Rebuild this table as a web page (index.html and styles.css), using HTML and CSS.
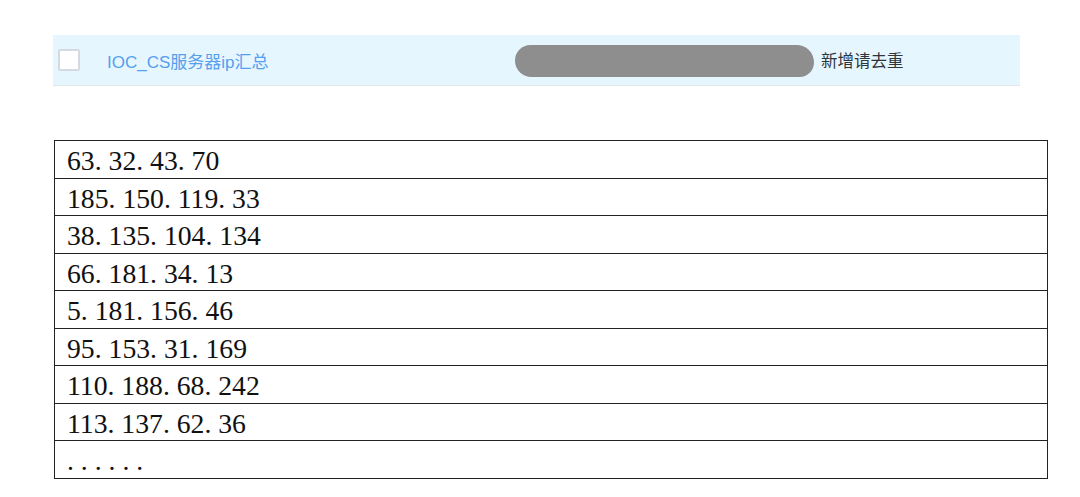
FILE: index.html
```html
<!DOCTYPE html>
<html lang="zh-CN">
<head>
<meta charset="utf-8">
<title>IOC</title>
<link rel="stylesheet" href="styles.css">
</head>
<body>
<div class="banner">
  <span class="checkbox"></span>
  <span class="title">IOC_CS服务器ip汇总</span>
  <span class="redact"></span>
  <span class="note">新增请去重</span>
</div>
<div class="iplist">
  <div class="row">63. 32. 43. 70</div>
  <div class="row">185. 150. 119. 33</div>
  <div class="row">38. 135. 104. 134</div>
  <div class="row">66. 181. 34. 13</div>
  <div class="row">5. 181. 156. 46</div>
  <div class="row">95. 153. 31. 169</div>
  <div class="row">110. 188. 68. 242</div>
  <div class="row">113. 137. 62. 36</div>
  <div class="row">. . . . . .</div>
</div>
</body>
</html>
```
FILE: styles.css
```css
html, body {
  margin: 0;
  padding: 0;
  background: #ffffff;
}
.banner {
  margin: 35px 0 0 53px;
  width: 967px;
  height: 50px;
  background: #e6f6fe;
  border-bottom: 1px solid #e2e7ec;
  display: flex;
  align-items: center;
  font-family: "Liberation Sans", "Noto Sans CJK SC", sans-serif;
  font-size: 16.5px;
}
.checkbox {
  box-sizing: border-box;
  width: 22px;
  height: 22px;
  margin-left: 5px;
  background: #ffffff;
  border: 2px solid #d5dae0;
  border-radius: 2px;
  flex: none;
}
.title {
  margin-left: 27px;
  width: 408px;
  font-size: 17px;
  color: #559fee;
  flex: none;
}
.redact {
  width: 299px;
  height: 32px;
  margin-top: 1px;
  background: #8e8e8e;
  border-radius: 16px 18px 15px 17px;
  flex: none;
}
.note {
  margin-left: 7px;
  color: #2f353b;
}
.iplist {
  margin: 54px 0 0 54px;
  width: 992px;
  border: 1px solid #222222;
  border-top: none;
  font-family: "Liberation Serif", "Noto Sans CJK SC", serif;
  font-size: 27.7px;
  color: #111111;
}
.row {
  box-sizing: border-box;
  height: 37.5px;
  border-top: 1px solid #222222;
  padding-left: 12px;
  line-height: 39px;
  white-space: pre;
}
```
